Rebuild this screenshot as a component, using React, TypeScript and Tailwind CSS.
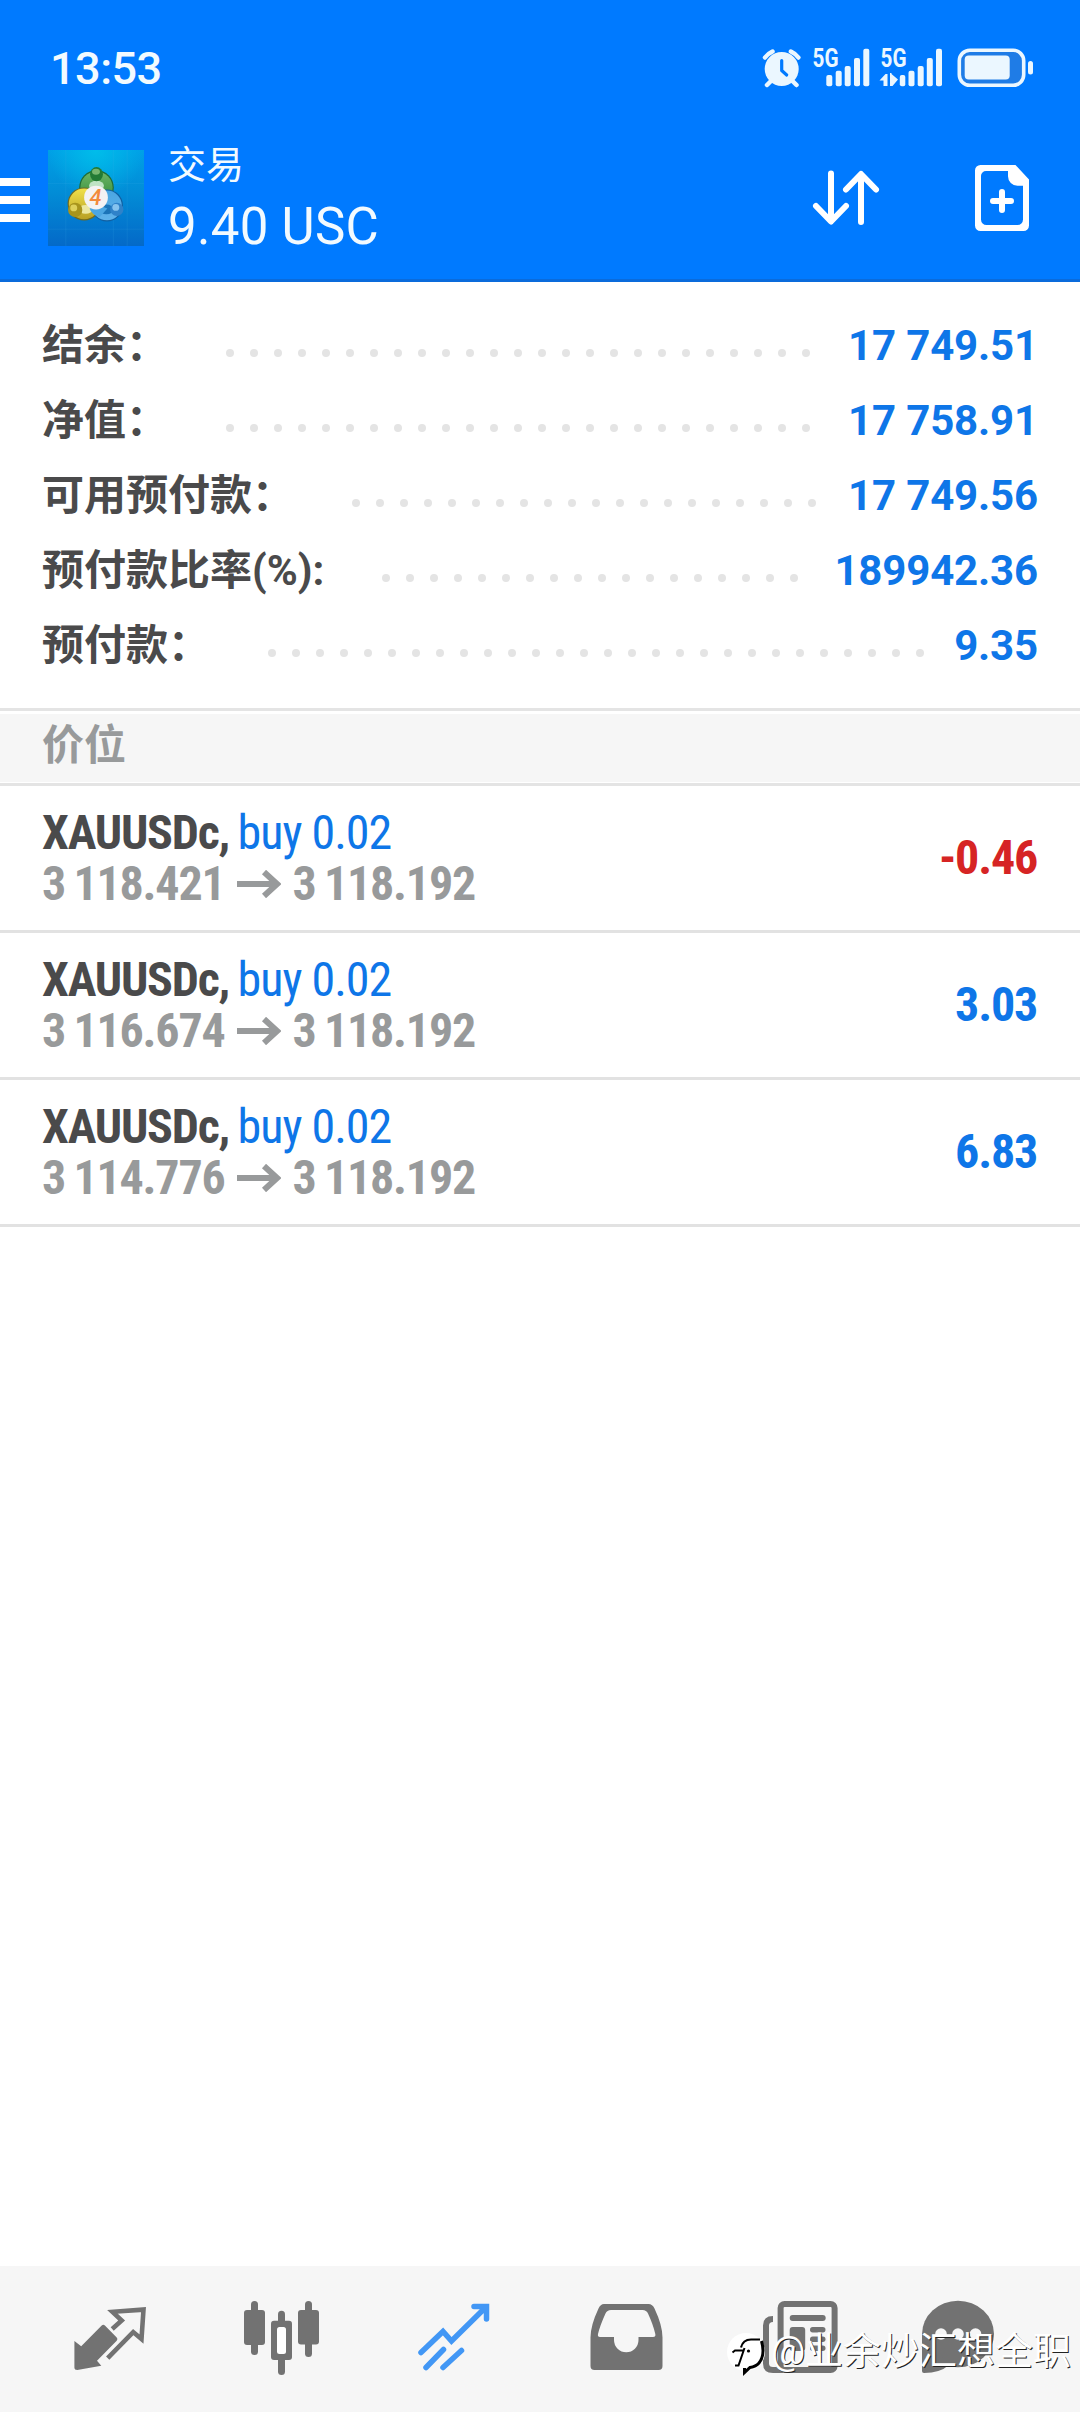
import type { ReactNode } from "react";

const SUMMARY = [
  { label: "结余：", value: "17 749.51", dots: 25 },
  { label: "净值：", value: "17 758.91", dots: 25 },
  { label: "可用预付款：", value: "17 749.56", dots: 20 },
  { label: "预付款比率(%):", value: "189942.36", dots: 18 },
  { label: "预付款：", value: "9.35", dots: 28 },
];

const POSITIONS = [
  { id: 1, open: "3 118.421", current: "3 118.192", profit: "-0.46" },
  { id: 2, open: "3 116.674", current: "3 118.192", profit: "3.03" },
  { id: 3, open: "3 114.776", current: "3 118.192", profit: "6.83" },
];

function StatusIcons() {
  return (
    <svg className="h-11 w-[272px] overflow-visible" viewBox="762 44 272 44" fill="#ebf7ff">
      {/* alarm */}
      <circle cx="781.7" cy="69" r="17" />
      <path
        d="M765 57.5a20 20 0 0 1 7.500-6M798.400 57.500a20 20 0 0 0-7.500-6M771 81l-4 4M792.500 81l4 4"
        stroke="#ebf7ff"
        strokeWidth="4.500"
        strokeLinecap="round"
        fill="none"
      />
      <path
        d="M781.700 60.500v10l5 4.500"
        stroke="#007aff"
        strokeWidth="3.200"
        strokeLinecap="round"
        strokeLinejoin="round"
        fill="none"
      />

      {/* first SIM */}
      <text x="812.500" y="67" fontSize="25" textLength="26" lengthAdjust="spacingAndGlyphs" className="font-[Roboto,sans-serif] font-bold">
        5G
      </text>
      <rect x="826.300" y="75" width="6" height="11.300" rx="2" />
      <rect x="835.700" y="70.700" width="6" height="15.600" rx="2" />
      <rect x="844.700" y="66" width="6" height="20.300" rx="2" />
      <rect x="854" y="58" width="6" height="28.300" rx="2" />
      <rect x="863.300" y="48.700" width="6" height="37.600" rx="2" />

      {/* second SIM, data active */}
      <text x="880.500" y="67" fontSize="25" textLength="26" lengthAdjust="spacingAndGlyphs" className="font-[Roboto,sans-serif] font-bold">
        5G
      </text>
      <path d="M879.500 80.500l6-6.500h2V86h-4v-5.500zM898 79.500l-6.500-5.500v-1h-1.500V86h2.500z" />
      <rect x="899.800" y="75" width="5.500" height="11.300" rx="2" />
      <rect x="908.500" y="70.700" width="6" height="15.600" rx="2" />
      <rect x="917.700" y="66" width="6" height="20.300" rx="2" />
      <rect x="926.800" y="58" width="6" height="28.300" rx="2" />
      <rect x="936" y="48.700" width="6" height="37.600" rx="2" />

      {/* battery */}
      <rect x="959.300" y="50.300" width="64.400" height="35" rx="10.500" fill="#1f7ce6" stroke="#ebf7ff" strokeWidth="3.600" />
      <rect x="964.700" y="55.500" width="45" height="24" rx="4" />
      <rect x="1028" y="61" width="5" height="13.500" rx="2.500" />
    </svg>
  );
}

function AppLogo() {
  return (
    <svg className="ml-[18px] size-[96px]" viewBox="0 0 97 97">
      <defs>
        <linearGradient id="sky" x1="0" y1="0" x2="0" y2="1">
          <stop offset="0" stopColor="#00a0e6" />
          <stop offset="0.450" stopColor="#028cd6" />
          <stop offset="1" stopColor="#0469c8" />
        </linearGradient>
        <radialGradient id="glow" cx="0.500" cy="0" r="0.500">
          <stop offset="0" stopColor="#00bdea" />
          <stop offset="1" stopColor="#00bdea" stopOpacity="0" />
        </radialGradient>
        <linearGradient id="green" x1="0" y1="0" x2="0" y2="1">
          <stop offset="0" stopColor="#6db567" />
          <stop offset="1" stopColor="#2d8a35" />
        </linearGradient>
        <linearGradient id="yellow" x1="0" y1="0" x2="0" y2="1">
          <stop offset="0" stopColor="#f0e04a" />
          <stop offset="1" stopColor="#b8a024" />
        </linearGradient>
        <linearGradient id="blue" x1="0" y1="0" x2="0" y2="1">
          <stop offset="0" stopColor="#4ba6e2" />
          <stop offset="1" stopColor="#5fb2ea" />
        </linearGradient>
      </defs>
      <rect width="97" height="97" fill="url(#sky)" />
      <rect width="97" height="97" fill="url(#glow)" />
      <path d="M18 0v97M66 0v97M80 0v97M0 34h97M0 80h97" stroke="#4db5ea" strokeOpacity="0.150" />
      <circle cx="49" cy="38" r="17.500" fill="#1f6b35" />
      <circle cx="49" cy="38" r="16.300" fill="url(#green)" />
      <ellipse cx="49" cy="36" rx="7.500" ry="5" fill="#bfe3c4" />
      <circle cx="59.500" cy="56" r="16.200" fill="#115fa0" />
      <circle cx="59.500" cy="56" r="15" fill="url(#blue)" />
      <ellipse cx="59" cy="60" rx="7" ry="5" fill="#1b74b8" />
      <circle cx="36.500" cy="54.500" r="16.700" fill="#6f6a20" />
      <circle cx="36.500" cy="54.500" r="15.500" fill="url(#yellow)" />
      <ellipse cx="38" cy="60" rx="7" ry="4.500" fill="#ece7a0" />
      <path d="M52 68q-8-3-10-9l10-3 8 3z" fill="#4ba6e2" />
      <ellipse cx="49" cy="24.500" rx="6.500" ry="7.200" fill="#237a35" />
      <ellipse cx="48.500" cy="22" rx="4" ry="3" fill="#77b56f" />
      <circle cx="27.500" cy="60.500" r="7.200" fill="#a8941c" />
      <circle cx="26" cy="58.500" r="3.500" fill="#ded05a" />
      <circle cx="69.500" cy="60" r="6.700" fill="#2f82c9" />
      <circle cx="68.500" cy="58" r="3.500" fill="#86c3ee" />
      <circle cx="48.500" cy="48" r="12" fill="#f4f2f3" />
      <text x="48" y="55.500" textAnchor="middle" fontSize="22" fill="#f28a3c" className="font-[Roboto,sans-serif] font-medium italic">
        4
      </text>
    </svg>
  );
}

function Header() {
  return (
    <header className="flex h-[282px] flex-col border-b-3 border-[#0a6bdb] bg-[#007aff] text-[#f2faff]">
      <div className="mt-[46px] flex h-[45px] items-start justify-between pr-[46px] pl-[50px]">
        <span className="text-[45px] leading-none font-medium tracking-[-0.5px]">13:53</span>
        <div className="-mt-0.5">
          <StatusIcons />
        </div>
      </div>
      <div className="mt-[46px] flex">
        <div className="mt-[41px] flex h-11 w-[30px] flex-col gap-2.5">
          <span className="h-2 bg-white" />
          <span className="h-2 bg-white" />
          <span className="h-2 bg-white" />
        </div>
        <div className="mt-[13px]">
          <AppLogo />
        </div>
        <div className="-mt-0.5 ml-6">
          <h1 className="text-[38px] leading-[60px]">交易</h1>
          <p className="mt-0.5 text-[51px] leading-[60px] tracking-[0.3px]">9.40 USC</p>
        </div>
        <svg
          className="mt-[31px] mr-[94px] ml-auto h-[60px] w-[70px]"
          viewBox="811 168 70 60"
          fill="none"
          stroke="white"
          strokeWidth="6"
          strokeLinecap="round"
          strokeLinejoin="round"
        >
          <path d="M831 173.500V221M816 206l15 15.500 15-15.500M861 222v-47M846 189.500l15-15.500 15 15.500" />
        </svg>
        <svg className="mt-7 mr-[51px] h-[66px] w-[54px]" viewBox="975 165 54 66" fill="white">
          <path
            fillRule="evenodd"
            d="M980.500 165h35l13.500 14.500v46a5.500 5.500 0 0 1-5.500 5.500h-43a5.500 5.500 0 0 1-5.500-5.500v-55a5.500 5.500 0 0 1 5.500-5.500zM986 171a5 5 0 0 0-5 5v43.500a5.500 5.500 0 0 0 5.500 5.500h31a5.500 5.500 0 0 0 5.500-5.500V185.700h-5.500a9.500 9.500 0 0 1-9.500-9.500V171z"
          />
          <path d="M1002 192v18M993 201h18" stroke="white" strokeWidth="6" strokeLinecap="round" />
        </svg>
      </div>
    </header>
  );
}

function SummaryRow({ label, value, dots }: { label: string; value: string; dots: number }) {
  return (
    <div className="flex text-[42px] leading-[75px]">
      <span className="font-bold text-[#4a4a4b]">{label}</span>
      <span className="mt-[41px] ml-[58px] flex flex-1 gap-4">
        {Array.from({ length: dots }, (_, i) => (
          <i key={i} className="size-2 shrink-0 rounded-full bg-[#e4e4e4]" />
        ))}
      </span>
      <span className="font-bold tracking-[-0.15px] text-[#0e76e8]">{value}</span>
    </div>
  );
}

function PositionRow({ open, current, profit }: { open: string; current: string; profit: string }) {
  const color = profit.startsWith("-") ? "text-[#d62424]" : "text-[#0e76e8]";
  return (
    <li className="flex h-[147px] items-center justify-between border-b-3 border-[#e2e2e2] px-[42px] text-5xl leading-[51px] font-bold tracking-[-1.2px] [word-spacing:-1.5px] [font-stretch:75%] font-['Roboto_Condensed',Roboto,sans-serif]">
      <div>
        <p className="text-[#4a4a4b]">
          XAUUSDc,{" "}
          <span className="font-normal tracking-[-1px] [word-spacing:0px] text-[#0e76e8]">buy 0.02</span>
        </p>
        <p className="flex items-center text-[#989a9b]">
          {open}
          <svg className="mx-3 h-7 w-11" viewBox="0 0 44 28" fill="none" stroke="currentColor" strokeWidth="6">
            <path d="M0 14h40M27 2l13 12-13 12" />
          </svg>
          {current}
        </p>
      </div>
      <span className={`-mt-0.5 mr-px ${color}`}>{profit}</span>
    </li>
  );
}

function TabIcon({ x, children }: { x: number; children: ReactNode }) {
  return (
    <svg className="size-20" viewBox={`${x} 2297 80 80`} fill="#727272">
      {children}
    </svg>
  );
}

function TabBar() {
  return (
    <nav className="relative mt-auto flex h-[146px] bg-[#f6f6f6] pt-[31px] pl-6">
      <div className="flex w-[172px] justify-center">
        <TabIcon x={70}>
          <path d="M74.400 2341l6.800 5.200 20.500-20.700q1.600-1.600 3.200 0l11.800 12q1.500 1.600 0 3.200L97 2360.700l4.300 5-24 4.300q-2.900 0-2.900-2.500z" />
          <path
            d="M112.200 2329l9.500-8.500-9.200-8.700 31-2.200-2 29.500-8.300-7-25.500 26"
            fill="none"
            stroke="#727272"
            strokeWidth="4.600"
          />
        </TabIcon>
      </div>
      <div className="flex w-[172px] justify-center">
        <TabIcon x={242}>
          <rect x="244" y="2310" width="21" height="35" rx="3" />
          <rect x="251" y="2301" width="7" height="54" rx="3.500" />
          <rect x="298" y="2310" width="21" height="34.500" rx="3" />
          <rect x="305" y="2301" width="7" height="56" rx="3.500" />
          <rect x="278" y="2310.700" width="7" height="64.300" rx="3.500" />
          <rect x="271" y="2320.700" width="21" height="39.300" rx="3" />
          <rect x="277" y="2327" width="9" height="27" rx="2.500" fill="#fff" />
        </TabIcon>
      </div>
      <div className="flex w-[172px] justify-center">
        <TabIcon x={414}>
          <path
            d="M421 2352.500l22-21 8.500 9.500 34.500-34M474 2306.500h12.500v12.500M443.500 2349.500l-17.500 18M461.500 2350.500l-18.500 17"
            fill="none"
            stroke="#4297f5"
            strokeWidth="5.500"
            strokeLinecap="round"
          />
        </TabIcon>
      </div>
      <div className="flex w-[172px] justify-center">
        <TabIcon x={586}>
          <path
            fillRule="evenodd"
            d="M604 2304h44.500q4 0 6 4.500 8 17 8 29V2366q0 4-4 4h-64q-4 0-4-4v-28.500q0-12 8-29 2-4.500 5.500-4.500zM611 2310q-4 0-5.500 3.500-5.500 12-7.500 20.500-.600 3 2 3h14v3a12.200 12.200 0 0 0 24.500 0v-3h14.500q3 0 2.300-3-2-9-7.300-20.500-1.500-3.500-5.500-3.500z"
          />
        </TabIcon>
      </div>
      <div className="flex w-[172px] justify-center">
        <TabIcon x={758}>
          <path d="M773 2319q-7 0-7 6.500v38q0 6.500 7 6.500h10" fill="none" stroke="#727272" strokeWidth="6" />
          <rect x="780.600" y="2304" width="54" height="66" rx="4" fill="none" stroke="#727272" strokeWidth="6" />
          <rect x="789.700" y="2315" width="36" height="6" rx="3" />
          <rect x="789.700" y="2327" width="15.500" height="24" rx="3" />
          <rect x="810" y="2327" width="15.500" height="5.500" rx="2.700" />
          <rect x="810" y="2336.500" width="15.500" height="5.500" rx="2.700" />
          <rect x="810" y="2345.500" width="15.500" height="5.500" rx="2.700" />
        </TabIcon>
      </div>
      <div className="flex w-[148px] justify-center">
        <TabIcon x={918}>
          <ellipse cx="958" cy="2334" rx="36" ry="33.200" />
          <path d="M922 2334v37q0 2 2 2 16 0 25-8z" />
          <circle cx="941" cy="2334" r="5.800" fill="#f6f6f6" />
          <circle cx="958" cy="2334" r="5.800" fill="#f6f6f6" />
          <circle cx="975.500" cy="2334" r="5.800" fill="#f6f6f6" />
        </TabIcon>
      </div>

      {/* author stamp */}
      <div className="absolute right-[9px] bottom-9 flex items-center text-white">
        <svg className="mt-1.5 mr-0.5 h-11 w-[42px]" viewBox="0 0 42 44" fill="none">
          <circle cx="19" cy="20" r="19" fill="white" />
          <path d="M8 33.500h3.500l6-17.500M5.500 20.500l2.500-2h8" stroke="black" strokeWidth="2" />
          <path d="M14 15.500q2-8 10-8h9" stroke="black" strokeWidth="2.200" />
          <path d="M34.500 9q4 14-2.500 22-3 3.500-9 4.500l-5.500 5v-4.500" stroke="black" strokeWidth="3" />
          <circle cx="21.500" cy="19" r="1.600" fill="black" />
        </svg>
        <span className="text-[38px] leading-[44px] [text-shadow:1px_1px_0_#222]">@业余炒汇想全职</span>
      </div>
    </nav>
  );
}

export default function App() {
  return (
    <div className="flex h-[2412px] w-[1080px] flex-col overflow-hidden bg-white font-[Roboto,'Noto_Sans_CJK_SC',sans-serif]">
      <Header />
      <section className="px-[42px] pt-[26px] pb-[25px]">
        {SUMMARY.map((row) => (
          <SummaryRow key={row.label} {...row} />
        ))}
      </section>
      <div className="border-t-3 border-b-3 border-[#e4e4e4]">
        <h2 className="h-[72px] border-t-3 border-b border-white bg-[#f6f6f6] px-[42px] text-[42px] leading-[63px] font-bold text-[#989a9b]">
          价位
        </h2>
      </div>
      <ul>
        {POSITIONS.map(({ id, ...position }) => (
          <PositionRow key={id} {...position} />
        ))}
      </ul>
      <TabBar />
    </div>
  );
}
